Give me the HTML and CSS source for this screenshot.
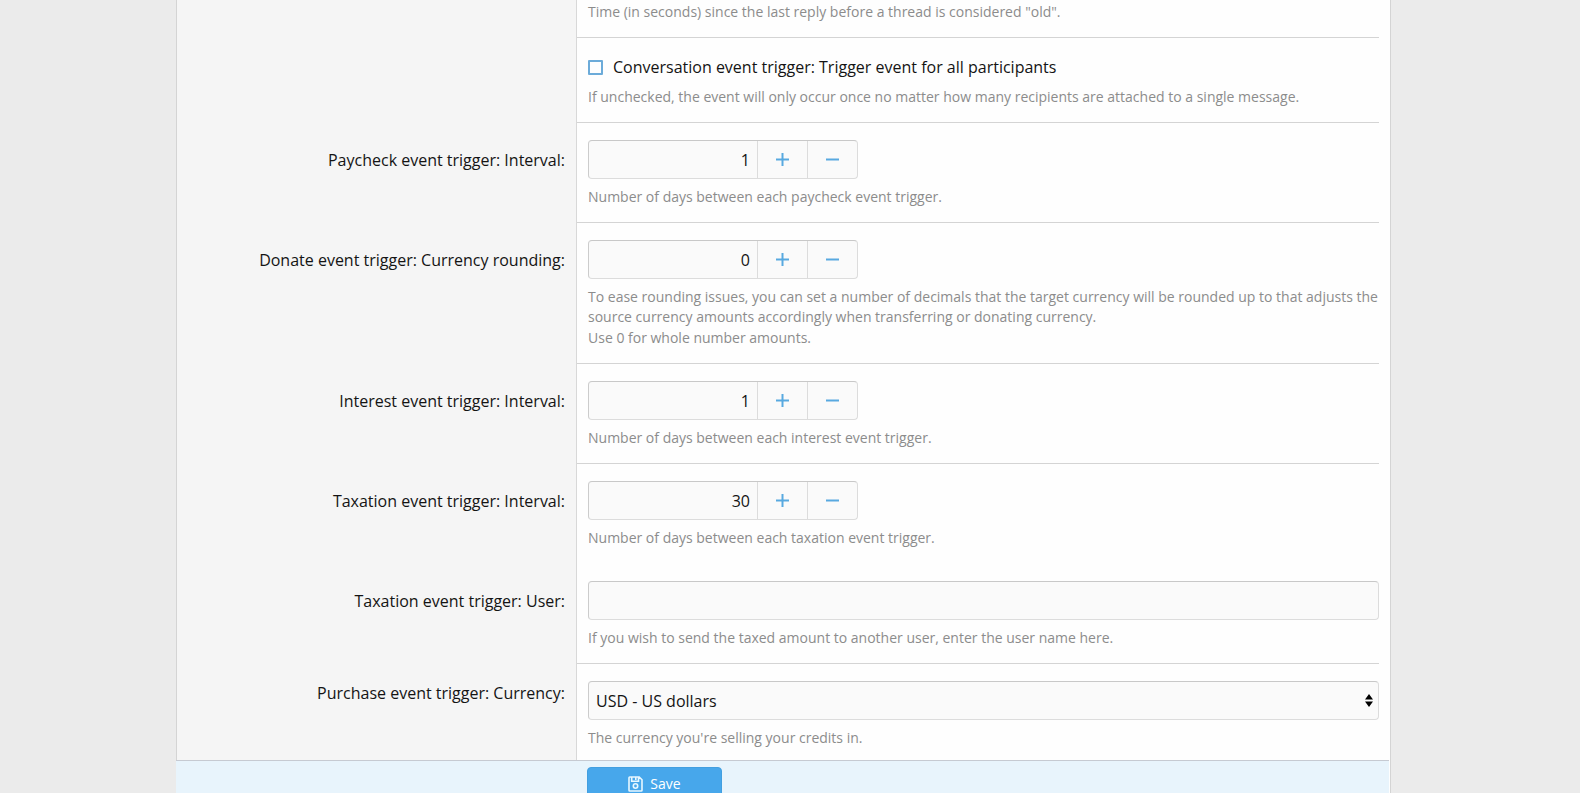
FILE: index.html
```
<!DOCTYPE html>
<html lang="en">
<head>
    <meta charset="UTF-8">
    <meta name="viewport" content="width=device-width, initial-scale=1.0">
    <title>Event trigger options</title>
    <link rel="stylesheet" href="styles.css">
</head>
<body>
    <form class="options">
        <div class="rows">
            <div class="row">
                <div class="row-label"></div>
                <div class="row-body row-body-cut">
                    <div class="help"><p>Time (in seconds) since the last reply before a thread is considered "old".</p></div>
                </div>
            </div>

            <div class="row">
                <div class="row-label"></div>
                <div class="row-body">
                    <label class="check">
                        <input type="checkbox" name="conversation_all">
                        <span>Conversation event trigger: Trigger event for all participants</span>
                    </label>
                    <div class="help"><p>If unchecked, the event will only occur once no matter how many recipients are attached to a single message.</p></div>
                </div>
            </div>

            <div class="row">
                <div class="row-label"><label for="paycheck">Paycheck event trigger: Interval:</label></div>
                <div class="row-body">
                    <div class="number-box">
                        <input type="text" inputmode="numeric" id="paycheck" value="1">
                        <button type="button" aria-label="Increase"><svg width="13" height="13" viewBox="0 0 13 13"><path d="M0 6.5h13M6.5 0v13"/></svg></button>
                        <button type="button" aria-label="Decrease"><svg width="13" height="13" viewBox="0 0 13 13"><path d="M0 6.5h13"/></svg></button>
                    </div>
                    <div class="help"><p>Number of days between each paycheck event trigger.</p></div>
                </div>
            </div>

            <div class="row">
                <div class="row-label"><label for="rounding">Donate event trigger: Currency rounding:</label></div>
                <div class="row-body">
                    <div class="number-box">
                        <input type="text" inputmode="numeric" id="rounding" value="0">
                        <button type="button" aria-label="Increase"><svg width="13" height="13" viewBox="0 0 13 13"><path d="M0 6.5h13M6.5 0v13"/></svg></button>
                        <button type="button" aria-label="Decrease"><svg width="13" height="13" viewBox="0 0 13 13"><path d="M0 6.5h13"/></svg></button>
                    </div>
                    <div class="help">
                        <p>To ease rounding issues, you can set a number of decimals that the target currency will be rounded up to that adjusts the source currency amounts accordingly when transferring or donating currency.</p>
                        <p>Use 0 for whole number amounts.</p>
                    </div>
                </div>
            </div>

            <div class="row">
                <div class="row-label"><label for="interest">Interest event trigger: Interval:</label></div>
                <div class="row-body">
                    <div class="number-box">
                        <input type="text" inputmode="numeric" id="interest" value="1">
                        <button type="button" aria-label="Increase"><svg width="13" height="13" viewBox="0 0 13 13"><path d="M0 6.5h13M6.5 0v13"/></svg></button>
                        <button type="button" aria-label="Decrease"><svg width="13" height="13" viewBox="0 0 13 13"><path d="M0 6.5h13"/></svg></button>
                    </div>
                    <div class="help"><p>Number of days between each interest event trigger.</p></div>
                </div>
            </div>

            <div class="row row-joined">
                <div class="row-label"><label for="taxation">Taxation event trigger: Interval:</label></div>
                <div class="row-body">
                    <div class="number-box">
                        <input type="text" inputmode="numeric" id="taxation" value="30">
                        <button type="button" aria-label="Increase"><svg width="13" height="13" viewBox="0 0 13 13"><path d="M0 6.5h13M6.5 0v13"/></svg></button>
                        <button type="button" aria-label="Decrease"><svg width="13" height="13" viewBox="0 0 13 13"><path d="M0 6.5h13"/></svg></button>
                    </div>
                    <div class="help"><p>Number of days between each taxation event trigger.</p></div>
                </div>
            </div>

            <div class="row">
                <div class="row-label"><label for="tax-user">Taxation event trigger: User:</label></div>
                <div class="row-body">
                    <input type="text" class="text-box" id="tax-user">
                    <div class="help"><p>If you wish to send the taxed amount to another user, enter the user name here.</p></div>
                </div>
            </div>

            <div class="row row-select">
                <div class="row-label"><label for="currency">Purchase event trigger: Currency:</label></div>
                <div class="row-body">
                    <div class="select-box">
                        <select id="currency">
                            <option>USD - US dollars</option>
                        </select>
                        <svg width="8" height="13" viewBox="0 0 8 13"><path d="M0 5.5L4 0l4 5.5zM0 7.5L4 13l4-5.5z"/></svg>
                    </div>
                    <div class="help"><p>The currency you're selling your credits in.</p></div>
                </div>
            </div>
        </div>

        <div class="submit-bar">
            <button type="submit" class="save-btn">
                <svg width="15" height="16" viewBox="0 0 15 16"><path d="M1.8 1h9.4L14 3.8v10.4a.8.8 0 0 1-.8.8H1.8a.8.8 0 0 1-.8-.8V1.8A.8.8 0 0 1 1.800 1zM3.700 1v4.200h6.800V1M7.800 1v3"/><circle cx="7.500" cy="10" r="2.200"/></svg>
                <span>Save</span>
            </button>
        </div>
    </form>
</body>
</html>
```
FILE: styles.css
```
* {
    box-sizing: border-box;
}

body {
    margin: 0;
    padding-right: 13px;
    height: 100vh;
    overflow: hidden;
    background-color: #ebebeb;
    color: #141414;
    font-family: "Segoe UI", "Open Sans", sans-serif;
    font-size: 16px;
    line-height: 24px;
}

input, select, button {
    font: inherit;
    color: inherit;
}

.options {
    display: flex;
    flex-direction: column;
    max-width: 1215px;
    height: 100%;
    margin: 0 auto;
}

.rows {
    flex: 1;
    min-height: 0;
    overflow: hidden;
    background-color: #fefefe;
    border: 1px solid #d4d4d4;
    border-width: 0 1px;
}

.row {
    display: flex;
}

.row-label {
    flex: 0 0 400px;
    padding: 25px 11px 0 0;
    text-align: right;
    background-color: #f5f5f5;
    border-right: 1px solid #d8d8d8;
}

.row-body {
    flex: 1;
    min-width: 0;
    margin-right: 11px;
    padding: 17px 0 15px 11px;
    border-bottom: 1px solid #d4d4d4;
}

.row-body-cut {
    padding-top: 0;
}

.row-joined .row-body {
    border-bottom-color: transparent;
}

.row-select .row-label {
    padding-top: 17px;
}

.row-select .row-body {
    border-bottom: none;
}

.help {
    margin-top: 8px;
    color: #8c8c8c;
    font-size: 14px;
    line-height: 20px;
}

.row-body-cut .help {
    margin-top: 2px;
}

.help p {
    margin: 0;
}

.help p + p {
    margin-top: 1px;
}

.check {
    display: flex;
    align-items: center;
    gap: 10px;
}

.check input {
    appearance: none;
    width: 15px;
    height: 15px;
    margin: 0;
    border: 2px solid #6cabd9;
    border-radius: 1px;
}

.number-box, .text-box, .select-box {
    height: 39px;
    background-color: #fafafa;
    border: 1px solid #dcdcdc;
    border-top-color: #c8c8c8;
    border-left-color: #cccccc;
    border-radius: 4px;
}

.number-box {
    display: flex;
    width: 270px;
}

.number-box input {
    flex: 1;
    min-width: 0;
    padding: 0 7px;
    text-align: right;
    background: none;
    border: none;
}

.number-box button {
    display: flex;
    align-items: center;
    justify-content: center;
    width: 50px;
    padding: 0;
    background: none;
    border: none;
    border-left: 1px solid #dcdcdc;
    cursor: pointer;
}

.number-box path {
    stroke: #58a9e0;
    stroke-width: 2;
}

.text-box {
    display: block;
    width: 100%;
    padding: 0 7px;
}

.select-box {
    position: relative;
}

.select-box select {
    appearance: none;
    width: 100%;
    height: 100%;
    padding: 0 24px 0 7px;
    background: none;
    border: none;
}

/* arrows lie over the select */
.select-box svg {
    position: absolute;
    top: 12px;
    right: 5px;
    pointer-events: none;
}

.submit-bar {
    flex: 0 0 33px;
    margin-right: 2px;
    padding: 6px 0 0 411px;
    overflow: hidden;
    background-color: #e8f4fc;
    border-top: 1px solid #c6cad2;
    box-shadow: 1px 0 #fefefe, 2px 0 #d4d4d4;
}

.save-btn {
    display: flex;
    align-items: center;
    justify-content: center;
    gap: 7px;
    width: 135px;
    height: 34px;
    padding: 0;
    color: #fff;
    font-size: 14px;
    background-color: #47a7eb;
    border: 1px solid #429fe0;
    border-radius: 4px;
    cursor: pointer;
}

.save-btn svg {
    fill: none;
    stroke: #e8f8ff;
    stroke-width: 1.600;
}
```
